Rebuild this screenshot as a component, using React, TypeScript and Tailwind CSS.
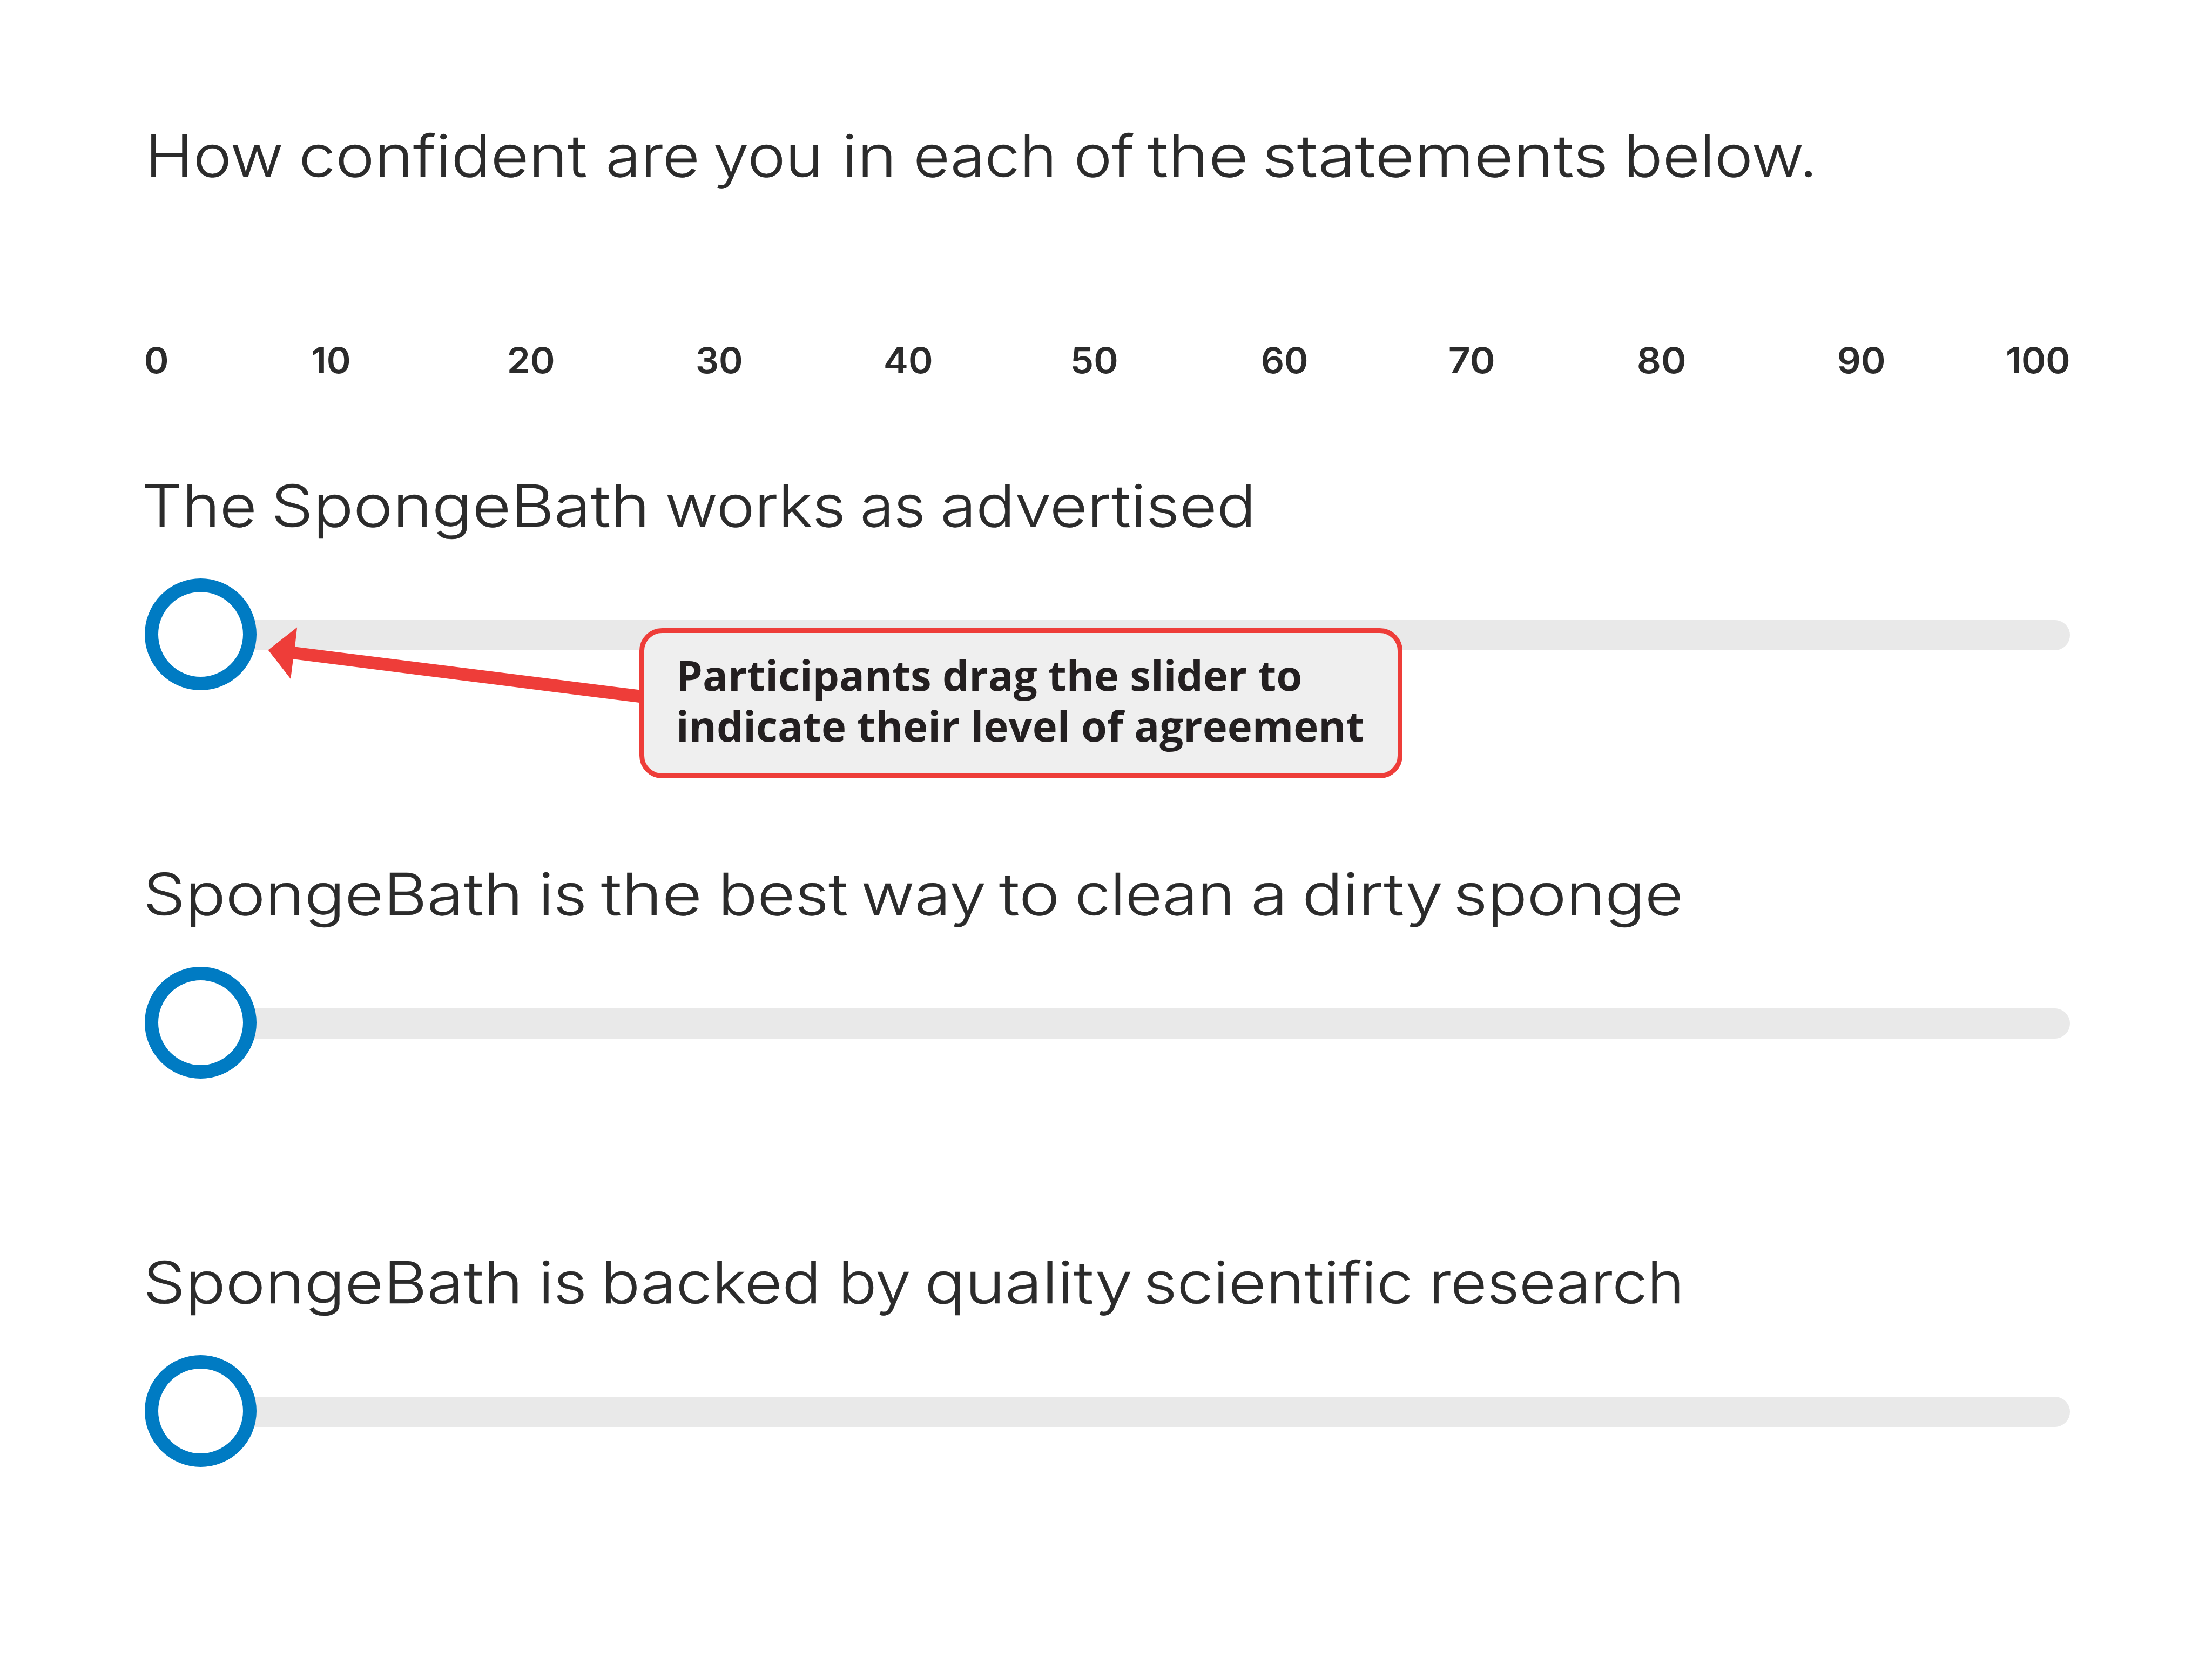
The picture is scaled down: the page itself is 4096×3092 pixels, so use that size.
type Word = [text: string, start: number, end: number];

const LEFT = 268;

const QUESTION: Word[] = [
  ["How", 280, 521],
  ["confident", 559, 1085],
  ["are", 1127, 1290],
  ["you", 1324, 1515],
  ["in", 1567, 1651],
  ["each", 1697, 1948],
  ["of", 1994, 2099],
  ["the", 2125, 2306],
  ["statements", 2344, 2972],
  ["below.", 3016, 3355],
];

const TICKS: Word[] = [
  ["0", 270, 310],
  ["10", 579, 647],
  ["20", 943, 1025],
  ["30", 1291, 1373],
  ["40", 1639, 1725],
  ["50", 1986, 2068],
  ["60", 2338, 2420],
  ["70", 2684, 2766],
  ["80", 3034, 3120],
  ["90", 3405, 3489],
  ["100", 3717, 3831],
];

const STATEMENTS: Word[][] = [
  [
    ["The", 268, 470],
    ["SpongeBath", 509, 1194],
    ["works", 1235, 1560],
    ["as", 1598, 1708],
    ["advertised", 1747, 2316],
  ],
  [
    ["SpongeBath", 272, 959],
    ["is", 1005, 1081],
    ["the", 1113, 1294],
    ["best", 1339, 1568],
    ["way", 1598, 1822],
    ["to", 1850, 1956],
    ["clean", 1996, 2278],
    ["a", 2322, 2374],
    ["dirty", 2417, 2668],
    ["sponge", 2698, 3111],
  ],
  [
    ["SpongeBath", 272, 959],
    ["is", 1005, 1081],
    ["backed", 1122, 1511],
    ["by", 1561, 1683],
    ["quality", 1718, 2093],
    ["scientific", 2124, 2611],
    ["research", 2655, 3110],
  ],
];

const ctx = document.createElement("canvas").getContext("2d")!;

// Widens each word so its ink runs exactly from start to end.
function fit(text: string, width: number, font: string) {
  ctx.font = font;
  const m = ctx.measureText(text);
  const scale = width / (m.actualBoundingBoxLeft + m.actualBoundingBoxRight);
  return `translateX(${m.actualBoundingBoxLeft * scale}px) scaleX(${scale})`;
}

function Words({ words, font }: { words: Word[]; font: string }) {
  return (
    <span className="flex whitespace-pre" style={{ paddingLeft: words[0][1] - LEFT }}>
      {words.map(([text, start, end], i) => (
        <span
          key={i}
          className="block shrink-0"
          style={{ width: (words[i + 1]?.[1] ?? end) - start }}
        >
          <span
            className="inline-block origin-left"
            style={{ transform: fit(text, end - start, font) }}
          >
            {text}
          </span>{" "}
        </span>
      ))}
    </span>
  );
}

function Slider({ label }: { label: Word[] }) {
  return (
    <section className="h-[719px]">
      <h2 className="h-[130px] text-[107px] leading-[130px] font-light [-webkit-text-stroke:0.6px_#2b2b2b]">
        <Words words={label} font="300 107px Inter" />
      </h2>
      <div className="mt-[70px] flex h-[207px] items-center">
        <span className="relative size-[207px] shrink-0 rounded-full border-[25px] border-[#007bc3] bg-white" />
        <span className="mt-[3px] -ml-5 h-[56px] flex-1 rounded-r-full bg-[#e9e9e9]" />
      </div>
    </section>
  );
}

function Callout() {
  return (
    <>
      <svg
        className="absolute top-[1150px] left-[490px] h-[160px] w-[700px]"
        viewBox="490 1150 700 160"
        fill="#ee3d39"
      >
        <path d="M496.6 1203.4 L550.1 1161.6 L546.1 1197.6 L1186 1277.6 V1301.3 L542.9 1220.3 L538.2 1257.1 Z" />
      </svg>
      <div className="absolute top-[1163px] left-[1184px] h-[278px] w-[1413px] rounded-[42px] border-[9px] border-[#ee3d39] bg-[#efefef] pt-[30px] pl-[59px] font-['Open_Sans',sans-serif] text-[77.9px] leading-[94px] font-bold whitespace-nowrap text-[#231f20]">
        Participants drag the slider to
        <br />
        indicate their level of agreement
      </div>
    </>
  );
}

export default function App() {
  return (
    <main className="relative h-[3092px] w-[4096px] overflow-hidden bg-white pt-[223px] pr-[263px] pl-[268px] font-['Inter',sans-serif] text-[#2b2b2b]">
      <h1 className="h-[130px] text-[107px] leading-[130px] font-light [-webkit-text-stroke:0.6px_#2b2b2b]">
        <Words words={QUESTION} font="300 107px Inter" />
      </h1>
      <div className="mt-[274px] mb-[164px] h-[80px] text-[66px] leading-[80px] font-semibold">
        <Words words={TICKS} font="600 66px Inter" />
      </div>
      {STATEMENTS.map((label, i) => (
        <Slider key={i} label={label} />
      ))}
      <Callout />
    </main>
  );
}
